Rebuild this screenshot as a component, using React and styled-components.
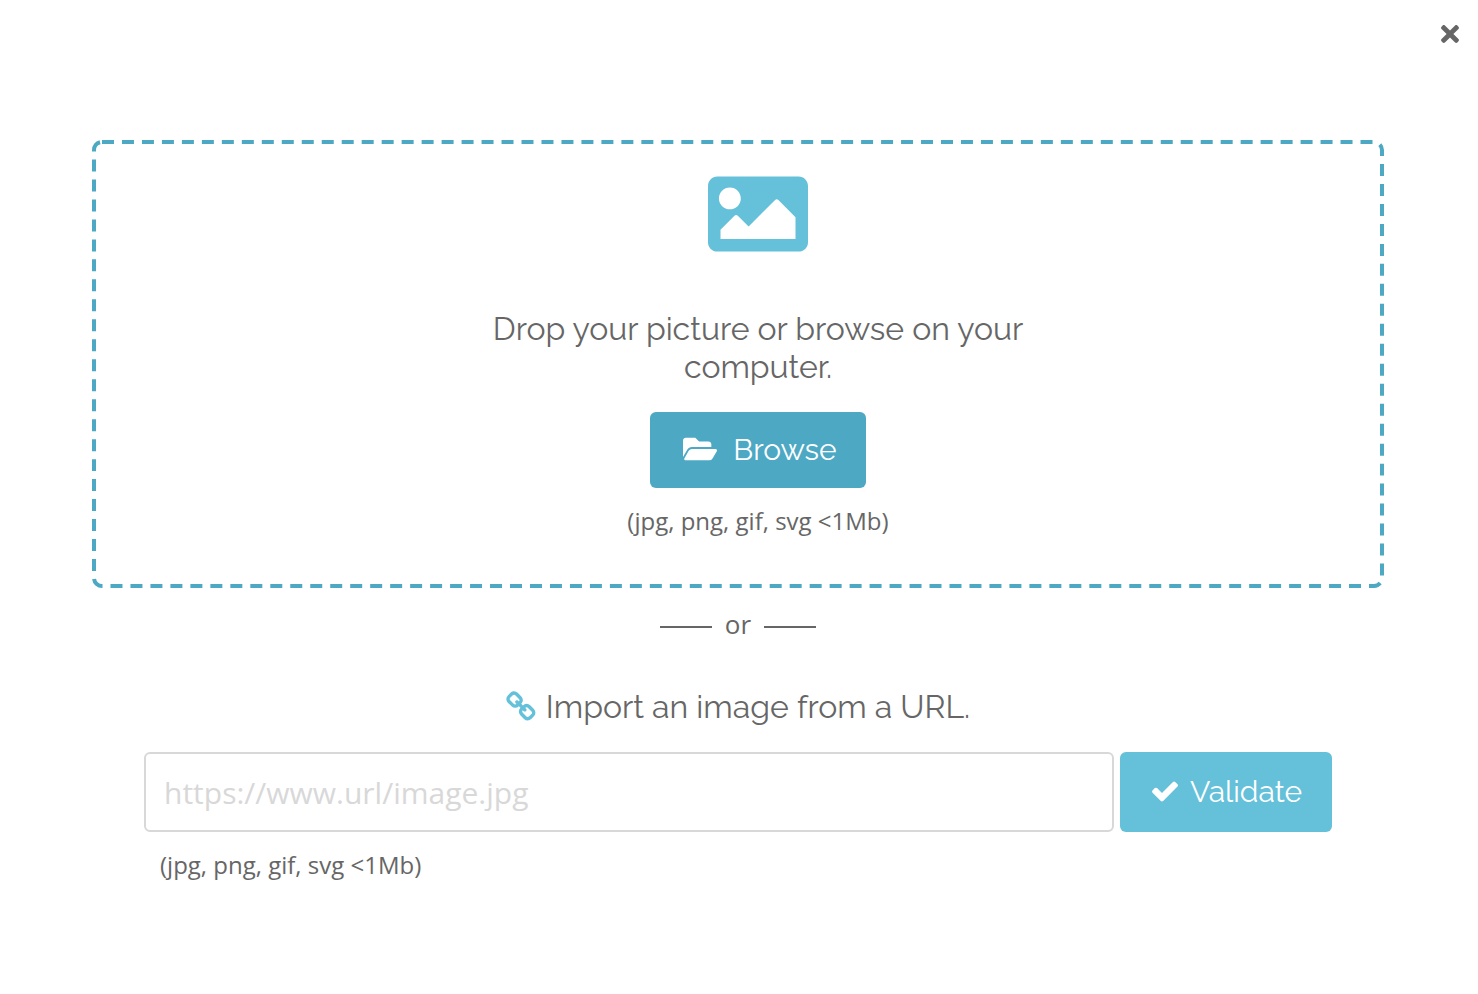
import styled, { createGlobalStyle } from "styled-components";
import { FaFolderOpen, FaImage, FaTimes } from "react-icons/fa";

const App = () => {
  return (
    <>
      <GlobalStyle />
      <Dialog>
        <Header>
          <Close type="button" aria-label="Close">
            <FaTimes size={26} />
          </Close>
        </Header>
        <Content>
          <DropZone>
            <Outline aria-hidden="true">
              <Dashes x="2" y="2" rx="8" pathLength="3454" />
            </Outline>
            <Picture size={100} />
            <Title>Drop your picture or browse on your computer.</Title>
            <BrowseButton type="button">
              <FaFolderOpen size={34} />
              Browse
            </BrowseButton>
            <Hint>(jpg, png, gif, svg &lt;1Mb)</Hint>
          </DropZone>
          <Separator>or</Separator>
          <ImportForm onSubmit={(e) => e.preventDefault()}>
            <ImportLabel htmlFor="image-url">
              <LinkGlyph size={32} viewBox="0 0 1792 1792">
                <path d="M1456 1216q0-40-28-68l-208-208q-28-28-68-28-42 0-72 32 3 3 19 18.5t21.5 21.5 15 19 13 25.5 3.5 27.5q0 40-28 68t-68 28q-15 0-27.5-3.5t-25.5-13-19-15-21.5-21.5-18.5-19q-33 31-33 73 0 40 28 68l206 207q27 27 68 27 40 0 68-26l147-146q28-28 28-67zm-703-705q0-40-28-68l-206-207q-28-28-68-28-39 0-68 27l-147 146q-28 28-28 67 0 40 28 68l208 208q27 27 68 27 42 0 72-31-3-3-19-18.5t-21.5-21.5-15-19-13-25.5-3.5-27.5q0-40 28-68t68-28q15 0 27.5 3.5t25.5 13 19 15 21.5 21.5 18.5 19q33-31 33-73zm895 705q0 120-85 203l-147 146q-83 83-203 83-121 0-204-85l-206-207q-83-83-83-203 0-123 88-209l-88-88q-86 88-208 88-120 0-204-84l-208-208q-84-84-84-204t85-203l147-146q83-83 203-83 121 0 204 85l206 207q83 83 83 203 0 123-88 209l88 88q86-88 208-88 120 0 204 84l208 208q84 84 84 204z" />
              </LinkGlyph>
              Import an image from a URL.
            </ImportLabel>
            <Row>
              <UrlInput
                id="image-url"
                type="text"
                placeholder="https://www.url/image.jpg"
              />
              <ValidateButton type="submit">
                <Glyph size={30} viewBox="0 0 1792 1792">
                  <path d="M1671 566q0 40-28 68l-724 724-136 136q-28 28-68 28t-68-28l-136-136-362-362q-28-28-28-68t28-68l136-136q28-28 68-28t68 28l294 295 656-657q28-28 68-28t68 28l136 136q28 28 28 68z" />
                </Glyph>
                Validate
              </ValidateButton>
            </Row>
            <FormHint>(jpg, png, gif, svg &lt;1Mb)</FormHint>
          </ImportForm>
        </Content>
      </Dialog>
    </>
  );
};

export default App;

const headingFont = `Raleway, Lato, sans-serif`;
const bodyFont = `"Open Sans", sans-serif`;

const GlobalStyle = createGlobalStyle`
  * {
    box-sizing: border-box;
  }
  body {
    margin: 0;
    background: #ffffff;
    color: #666666;
    font-family: ${bodyFont};
    -webkit-font-smoothing: antialiased;
  }
`;

const Dialog = styled.main`
  min-height: 100vh;
`;
const Header = styled.header`
  display: flex;
  justify-content: flex-end;
  padding: 14px 8px 0 0;
`;
const Close = styled.button`
  display: flex;
  align-items: center;
  justify-content: center;
  width: 40px;
  height: 40px;
  padding: 0;
  border: 0;
  background: none;
  color: #666666;
  cursor: pointer;
`;
const Glyph = styled.svg`
  width: ${(p) => p.size}px;
  height: ${(p) => p.size}px;
  flex: none;
  fill: currentColor;
`;
const LinkGlyph = styled(Glyph)`
  color: #65c0da;
`;
const Content = styled.div`
  padding: 86px 94px 40px 92px;
`;
const DropZone = styled.section`
  position: relative;
  display: flex;
  flex-direction: column;
  align-items: center;
  padding: 24px 0 50px 40px;
  border-radius: 10px;
`;
const Outline = styled.svg`
  position: absolute;
  inset: 0;
  width: 100%;
  height: 100%;
  pointer-events: none;
`;
const Dashes = styled.rect`
  width: calc(100% - 4px);
  height: calc(100% - 4px);
  fill: none;
  stroke: #4ca8c3;
  stroke-width: 4px;
  stroke-dasharray: 12 8;
`;
const Picture = styled(FaImage)`
  color: #65c0da;
`;
const Title = styled.h2`
  max-width: 600px;
  margin: 46px 0 26px;
  font-family: ${headingFont};
  font-size: 32px;
  font-weight: 400;
  line-height: 38px;
  text-align: center;
`;
const Button = styled.button`
  display: flex;
  align-items: center;
  justify-content: center;
  border: 0;
  border-radius: 6px;
  color: #ffffff;
  font-family: ${headingFont};
  font-size: 30px;
  line-height: 36px;
  cursor: pointer;

  svg {
    margin-bottom: 2px;
  }
`;
const BrowseButton = styled(Button)`
  gap: 16px;
  min-width: 216px;
  height: 76px;
  padding: 0 28px 0 32px;
  background: #4ca8c3;
`;
const ValidateButton = styled(Button)`
  gap: 10px;
  min-width: 212px;
  padding: 0 28px;
  background: #65c0da;
`;
const Hint = styled.p`
  margin: 16px 0 0;
  font-size: 24px;
  line-height: 34px;
`;
const Separator = styled.div`
  display: flex;
  align-items: center;
  justify-content: center;
  gap: 13px;
  margin-top: 18px;
  font-size: 26px;
  line-height: 36px;

  &::before,
  &::after {
    content: "";
    width: 52px;
    height: 2px;
    margin-top: 6px;
    background: #666666;
  }
`;
const ImportForm = styled.form`
  padding: 46px 52px 0;
`;
const ImportLabel = styled.label`
  display: flex;
  align-items: center;
  justify-content: center;
  gap: 8px;
  font-family: ${headingFont};
  font-size: 32px;
  line-height: 38px;
`;
const Row = styled.div`
  display: flex;
  gap: 6px;
  margin-top: 26px;
`;
const UrlInput = styled.input`
  flex: 1;
  min-width: 0;
  height: 80px;
  padding: 0 18px;
  border: 2px solid #d8d8d8;
  border-radius: 6px;
  color: #666666;
  font-family: ${bodyFont};
  font-size: 30px;

  &::placeholder {
    color: #d8d8d8;
    opacity: 1;
  }
`;
const FormHint = styled(Hint)`
  padding-left: 16px;
`;
